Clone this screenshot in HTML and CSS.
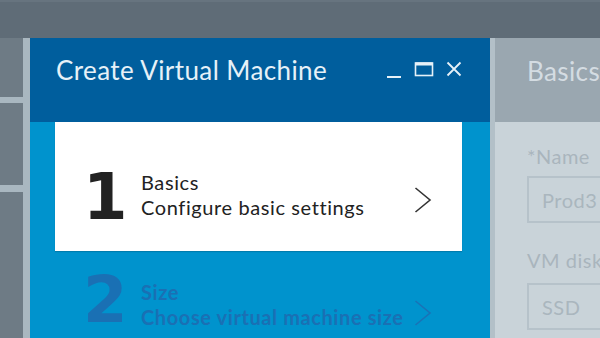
FILE: index.html
```html
<!DOCTYPE html>
<html lang="en">
<head>
    <meta charset="UTF-8">
    <meta name="viewport" content="width=device-width, initial-scale=1.0">
    <title>Create Virtual Machine</title>
    <link rel="stylesheet" href="styles.css">
</head>
<body>
    <div class="topbar"></div>

    <div class="main">
        <div class="rail">
            <div class="cell cell-a"></div>
            <div class="cell cell-b"></div>
            <div class="cell cell-c"></div>
        </div>

        <section class="blade">
            <div class="blade-head">
                <h1>Create Virtual Machine</h1>
                <div class="controls">
                    <svg width="16" height="18" viewBox="0 0 16 18"><line x1="1" y1="16" x2="15" y2="16" stroke="#e6f1f8" stroke-width="2"/></svg>
                    <svg width="20" height="16" viewBox="0 0 20 16"><rect x="1.5" y="2" width="17" height="12.5" fill="none" stroke="#e6f1f8" stroke-width="1.6"/><rect x="1.5" y="1.5" width="17" height="3" fill="#e6f1f8"/></svg>
                    <svg width="16" height="16" viewBox="0 0 16 16"><path d="M1.5 1.5 L14.5 14.5 M14.5 1.5 L1.5 14.5" stroke="#e6f1f8" stroke-width="1.8"/></svg>
                </div>
            </div>

            <div class="steps">
                <div class="step step-1 active">
                    <span class="num">1</span>
                    <div class="step-text">
                        <div class="step-title">Basics</div>
                        <div class="step-sub">Configure basic settings</div>
                    </div>
                    <svg class="chevron" width="18" height="26" viewBox="0 0 18 26"><polyline points="1.5,1 16,13 1.5,25" fill="none" stroke="#333" stroke-width="1.6"/></svg>
                </div>
                <div class="step step-2">
                    <span class="num">2</span>
                    <div class="step-text">
                        <div class="step-title">Size</div>
                        <div class="step-sub">Choose virtual machine size</div>
                    </div>
                    <svg class="chevron" width="18" height="26" viewBox="0 0 18 26"><polyline points="1.5,1 16,13 1.5,25" fill="none" stroke="#1a72b6" stroke-width="1.6"/></svg>
                </div>
            </div>
        </section>

        <section class="detail">
            <div class="detail-head">Basics</div>
            <div class="detail-body">
                <label class="field-label">*Name</label>
                <div class="field-box box-name">Prod3</div>
                <label class="field-label label-disk">VM disk</label>
                <div class="field-box box-disk">SSD</div>
            </div>
        </section>
    </div>
</body>
</html>
```

FILE: styles.css
```css
body {
    margin: 0;
    padding: 0;
    width: 600px;
    height: 338px;
    overflow: hidden;
    font-family: 'Lato', sans-serif;
    background: #5f6c77;
}
.topbar {
    height: 38px;
    background: #5f6c77;
    border-top: 2px solid #67747f;
    box-sizing: border-box;
}
.main {
    display: flex;
    height: 300px;
    overflow: hidden;
}

/* left rail of earlier blades */
.rail {
    width: 23px;
    flex: none;
    background: #a9b7c0;
    border-right: 7px solid #a9b7c0;
    display: flex;
    flex-direction: column;
}
.cell {
    background: #6e7b85;
    flex: none;
}
.cell-a { height: 59px; }
.cell-b { height: 82px; margin-top: 6px; }
.cell-c { flex: 1; margin-top: 7px; }

/* main blade */
.blade {
    width: 460px;
    flex: none;
    background: #0093cd;
    display: flex;
    flex-direction: column;
    overflow: hidden;
}
.blade-head {
    height: 84px;
    flex: none;
    background: #005e9d;
    display: flex;
    align-items: flex-start;
    justify-content: space-between;
    padding: 0 28px 0 26px;
    box-sizing: border-box;
}
.blade-head h1 {
    margin: 0;
    padding-top: 16px;
    font-size: 26px;
    font-weight: 400;
    letter-spacing: 0.4px;
    color: #e6f1f8;
}
.controls {
    display: flex;
    align-items: flex-start;
    gap: 12px;
    padding-top: 23px;
}
.controls svg {
    display: block;
}
.steps {
    display: flex;
    flex-direction: column;
    flex: none;
}
.step {
    flex: none;
    height: 129px;
    margin-left: 25px;
    width: 407px;
    display: flex;
    align-items: flex-start;
    box-sizing: border-box;
    padding: 0 30px 0 28px;
    color: #1a70b4;
}
.step.active {
    background: #fff;
    color: #222;
    box-shadow: 0 1px 1px rgba(0, 0, 0, 0.15);
}
.num {
    font-family: 'DejaVu Sans', sans-serif;
    font-weight: 700;
    font-size: 64px;
    line-height: 64px;
    width: 58px;
    flex: none;
}
.step-text {
    flex: 1;
    font-size: 20px;
    line-height: 25px;
    letter-spacing: 0.6px;
    font-weight: 700;
    white-space: nowrap;
}
.step.active .step-text {
    font-weight: 400;
}
.chevron {
    display: block;
    flex: none;
}
.step-1 .num { margin-top: 43px; }
.step-1 .step-text { margin-top: 48px; }
.step-1 .chevron { margin-top: 65px; }
.step-2 .num { margin-top: 17px; }
.step-2 .step-text { margin-top: 29px; }
.step-2 .chevron { margin-top: 49px; }

/* next blade, partly off screen */
.detail {
    flex: 1;
    min-width: 0;
    border-left: 5px solid #b3c0c8;
    background: #c9d3d9;
    display: flex;
    flex-direction: column;
    overflow: hidden;
}
.detail-head {
    height: 84px;
    flex: none;
    background: #9aa7b0;
    padding: 17px 0 0 32px;
    box-sizing: border-box;
    font-size: 26px;
    letter-spacing: 0.4px;
    color: #d4dce2;
    white-space: nowrap;
}
.detail-body {
    flex: none;
    padding: 22px 0 0 32px;
    display: flex;
    flex-direction: column;
}
.field-label {
    font-size: 20px;
    color: #a9b5bd;
    line-height: 24px;
    letter-spacing: 0.5px;
    white-space: nowrap;
}
.field-box {
    flex: none;
    width: 240px;
    height: 47px;
    border: 2px solid #b6c2ca;
    box-sizing: border-box;
    padding: 10px 0 0 13px;
    font-size: 20px;
    line-height: 24px;
    letter-spacing: 0.5px;
    color: #aab6be;
}
.box-name { margin-top: 8px; }
.label-disk { margin-top: 25px; }
.box-disk { margin-top: 11px; }
```
